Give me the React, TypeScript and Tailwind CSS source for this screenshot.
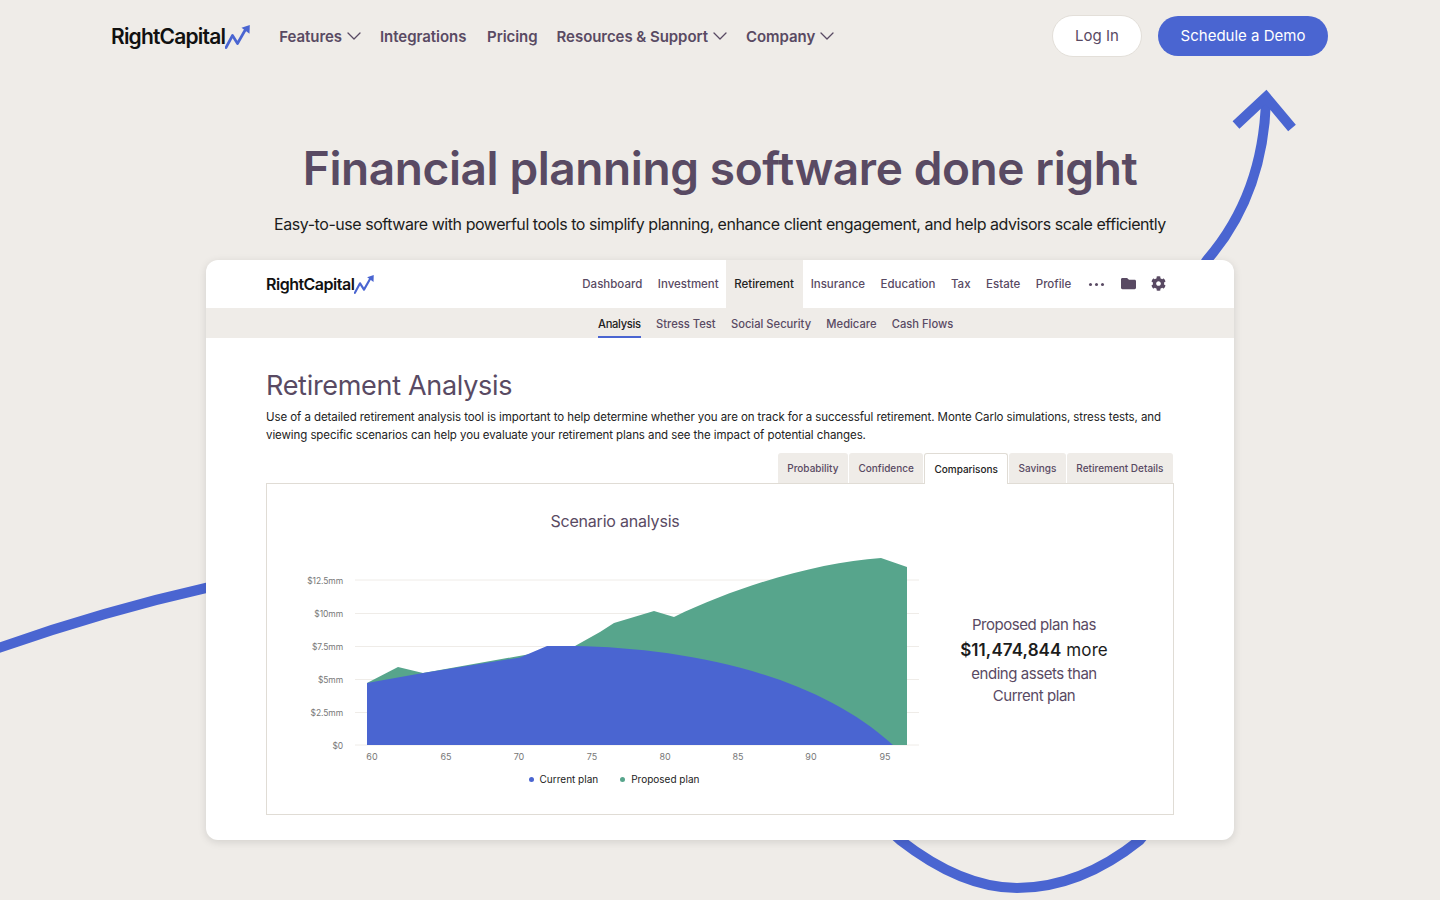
import { ChevronDown } from 'lucide-react';
import { FaCog, FaFolder } from 'react-icons/fa';

const mainNav = ['Dashboard', 'Investment', 'Retirement', 'Insurance', 'Education', 'Tax', 'Estate', 'Profile'];
const subNav = ['Analysis', 'Stress Test', 'Social Security', 'Medicare', 'Cash Flows'];
const tabs = ['Probability', 'Confidence', 'Comparisons', 'Savings', 'Retirement Details'];
const yTicks = [
  { label: '$12.5mm', y: 580 },
  { label: '$10mm', y: 613.5 },
  { label: '$7.5mm', y: 646.5 },
  { label: '$5mm', y: 679.5 },
  { label: '$2.5mm', y: 712.5 },
  { label: '$0', y: 745 },
];
const xTicks = [
  { label: '60', x: 372 },
  { label: '65', x: 446 },
  { label: '70', x: 519 },
  { label: '75', x: 592 },
  { label: '80', x: 665 },
  { label: '85', x: 738 },
  { label: '90', x: 811 },
  { label: '95', x: 885 },
];

function Logo({ small }: { small?: boolean }) {
  return (
    <div className="flex items-center">
      <span
        className={
          small
            ? 'text-[16px] font-semibold tracking-[-0.5px] text-[#111]'
            : 'text-[21px] font-semibold tracking-[-0.8px] text-[#111]'
        }
      >
        RightCapital
      </span>
      <svg
        viewBox="0 0 25 24"
        className={small ? 'ml-0 h-[19px] w-[20px]' : 'ml-0 h-[24px] w-[25px]'}
        fill="none"
      >
        <path
          d="M1 22.5 L7.5 10.5 L12.5 18.5 L20.5 4.5"
          stroke="#4a65d1"
          strokeWidth="2.7"
          strokeLinejoin="round"
          strokeLinecap="round"
        />
        <path d="M16.5 2.8 L24.8 0 L24.5 8.8 Z" fill="#4a65d1" />
      </svg>
    </div>
  );
}

function Chart() {
  return (
    <svg viewBox="290 545 640 219" className="ml-[23px] mt-[12px] h-[219px] w-[640px]">
      {yTicks.map((t) => (
        <g key={t.label}>
          <line x1="355" x2="919" y1={t.y} y2={t.y} stroke="#efece8" strokeWidth="1" />
          <text x="343" y={t.y + 3.5} textAnchor="end" fontSize="8.5" letterSpacing="-0.1" fill="#777">
            {t.label}
          </text>
        </g>
      ))}
      <path
        fill="#57a58c"
        d="M367 683 L398 667 L423 673 L575 646 L600 632 L614 623 L654 611 L674 617 C740 585 820 562 881 558 L907 567 L907 745 L367 745 Z"
      />
      <path
        fill="#4a65d1"
        d="M367 683 L423 673 L520 657.5 L547 646 L575 646 C680 648 812 671 893 745 L367 745 Z"
      />
      {xTicks.map((t) => (
        <text key={t.label} x={t.x} y="760" textAnchor="middle" fontSize="9" fill="#777">
          {t.label}
        </text>
      ))}
    </svg>
  );
}

export default function App() {
  return (
    <div className="relative h-[900px] overflow-hidden bg-[#efece8] font-['Inter',sans-serif]">
      {/* big arrow that runs behind the card */}
      <svg viewBox="0 0 1440 900" className="absolute inset-0 h-[900px] w-[1440px]" fill="none">
        <path
          d="M-10 651 C60 626 130 605 210 587 L600 500 C700 600 820 770 900 840 C945 875 985 888 1017 888 C1060 888 1100 872 1140 840 C1180 800 1174 298 1207 260 C1240 222 1264 170 1266 100"
          stroke="#4a65d1"
          strokeWidth="10"
        />
        <path d="M1236 125 L1266 97 L1292 128" stroke="#4a65d1" strokeWidth="10" />
      </svg>

      <div className="relative">
        <header className="flex h-[72px] items-center justify-between pl-[111px] pr-[112px]">
          <div className="flex items-center pt-[1px]">
            <Logo />
            <nav className="ml-[29px] flex items-center gap-[18px] pt-[1px] text-[15px] font-semibold tracking-[-0.05px] text-[#594a63]">
              <a className="flex items-center">
                Features <ChevronDown size={24} strokeWidth={1.3} className="-mr-[4px] mb-[2px]" />
              </a>
              <a className="w-[89px]">Integrations</a>
              <a>Pricing</a>
              <a className="ml-[1px] flex items-center">
                Resources &amp; Support <ChevronDown size={24} strokeWidth={1.3} className="-mr-[4px] mb-[2px]" />
              </a>
              <a className="flex items-center">
                Company <ChevronDown size={24} strokeWidth={1.3} className="mb-[2px]" />
              </a>
            </nav>
          </div>
          <div className="flex items-center gap-[16px] text-[15px]">
            <a className="flex h-[42px] w-[90px] items-center justify-center rounded-full border border-[#e3dfd9] bg-white text-[#594a63]">
              Log In
            </a>
            <a className="flex h-[40px] w-[170px] items-center justify-center rounded-full bg-[#4a65d1] text-white">
              Schedule a Demo
            </a>
          </div>
        </header>

        <h1 className="mt-[66px] text-center text-[46px] font-semibold leading-[60px] tracking-[-0.4px] text-[#594a63]">
          Financial planning software done right
        </h1>
        <p className="mt-[14px] text-center text-[16px] leading-[24px] tracking-[-0.45px] text-[#1c1c1c]">
          Easy-to-use software with powerful tools to simplify planning, enhance client engagement, and help advisors scale efficiently
        </p>

        <div className="mx-auto mt-[24px] h-[580px] w-[1028px] overflow-hidden rounded-[12px] bg-white shadow-[0_2px_8px_rgba(0,0,0,0.12)]">
          <div className="flex h-[48px] items-center justify-between pl-[60px] pr-[68px]">
            <Logo small />
            <div className="flex h-full items-center text-[11.5px] font-medium text-[#594a63]">
              {mainNav.map((item) => (
                <a
                  key={item}
                  className={
                    item === 'Retirement'
                      ? 'flex h-full items-center bg-[#efece8] pl-[7.75px] pr-[9px] pt-[2px] text-[#222]'
                      : 'flex h-full items-center px-[7.75px] pt-[2px]'
                  }
                >
                  {item}
                </a>
              ))}
              <span className="ml-[10px] flex gap-[3px]">
                <i className="h-[3px] w-[3px] rounded-full bg-[#594a63]" />
                <i className="h-[3px] w-[3px] rounded-full bg-[#594a63]" />
                <i className="h-[3px] w-[3px] rounded-full bg-[#594a63]" />
              </span>
              <FaFolder size={15} className="ml-[17px] -mt-[2px]" />
              <FaCog size={15} className="ml-[15px] -mt-[2px]" />
            </div>
          </div>

          <div className="flex h-[30px] gap-[15.25px] bg-[#efece8] pl-[392px] text-[11.2px] font-medium text-[#594a63]">
            {subNav.map((item) => (
              <a
                key={item}
                className={
                  item === 'Analysis'
                    ? 'flex h-full items-center border-b-2 border-[#4a65d1] pt-[5px] tracking-[-0.3px] text-[#222]'
                    : 'flex h-full items-center pt-[3px]'
                }
              >
                {item}
              </a>
            ))}
          </div>

          <div className="px-[60px]">
            <h2 className="mt-[29px] text-[27px] leading-[38px] tracking-[-0.3px] text-[#594a63]">Retirement Analysis</h2>
            <p className="mt-[3px] text-[11.5px] leading-[18px] tracking-[-0.08px] text-[#222]">
              Use of a detailed retirement analysis tool is important to help determine whether you are on track for a successful retirement. Monte Carlo simulations, stress tests, and viewing specific scenarios can help you evaluate your retirement plans and see the impact of potential changes.
            </p>

            <div className="relative z-10 mt-[9px] flex h-[30px] justify-end gap-px pr-[1px] text-[10px] font-medium text-[#594a63]">
              {tabs.map((tab) => (
                <a
                  key={tab}
                  className={
                    tab === 'Comparisons'
                      ? 'flex h-[31px] items-center rounded-t-[3px] border border-b-0 border-[#e0dcd5] bg-white px-[9px] text-[#222]'
                      : 'flex items-center rounded-t-[3px] bg-[#efece8] px-[9.5px]'
                  }
                >
                  {tab}
                </a>
              ))}
            </div>

            <div className="flex h-[332px] border border-[#e0dcd5]">
              <div className="w-[660px]">
                <div className="mt-[25px] pl-[36px] text-center text-[16px] leading-[24px] tracking-[-0.2px] text-[#594a63]">Scenario analysis</div>
                <Chart />
                <div className="mt-[8px] flex justify-center gap-[22px] pl-[34px] text-[10px] leading-[14px] text-[#222]">
                  <span className="flex items-center gap-[6px]">
                    <i className="h-[5px] w-[5px] rounded-full bg-[#4a65d1]" />
                    Current plan
                  </span>
                  <span className="flex items-center gap-[6px]">
                    <i className="h-[5px] w-[5px] rounded-full bg-[#57a58c]" />
                    Proposed plan
                  </span>
                </div>
              </div>
              <div className="w-[214px] pt-[130px] text-center text-[15px] leading-[22px] tracking-[-0.45px] text-[#594a63]">
                <div>Proposed plan has</div>
                <div className="mt-[2px] text-[17px] leading-[25px] tracking-[0.1px] text-[#1c1c1c]">
                  <b className="font-semibold">$11,474,844</b> more
                </div>
                <div>ending assets than</div>
                <div>Current plan</div>
              </div>
            </div>
          </div>
        </div>
      </div>
    </div>
  );
}
